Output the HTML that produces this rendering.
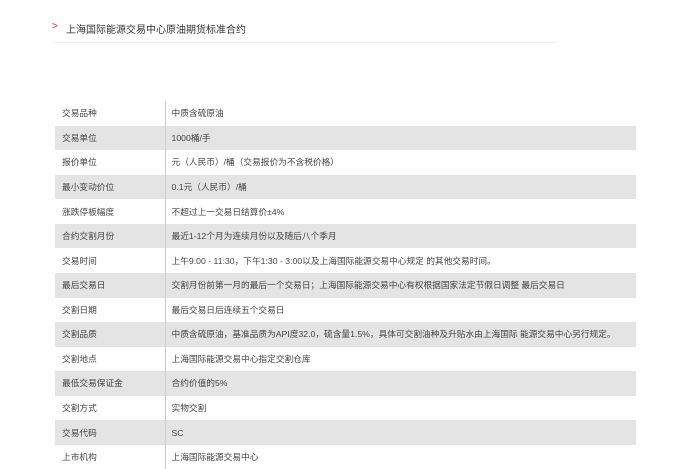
<!DOCTYPE html>
<html><head><meta charset="utf-8"><style>
body{margin:0;background:#fff;width:683px;height:461px;overflow:hidden;font-family:"Liberation Sans","Noto Sans CJK SC",sans-serif;color:#444;}
.t{position:absolute;left:66px;top:21px;font-size:10px;color:#333;}
.a{position:absolute;left:52px;top:21px;font-size:10px;color:#c33;}
.l{position:absolute;left:52px;top:42px;width:505px;height:1px;background:#f2f2f2;}
table{position:absolute;left:55px;top:101px;width:581px;border-collapse:collapse;font-size:8.7px;}
td{height:24.57px;padding:0;line-height:24px;white-space:nowrap;}
td:first-child{width:110px;padding-left:7px;box-sizing:border-box;border-right:1px solid #ccc;}
td:last-child{padding-left:6px;}
tr:nth-child(even) td{background:#e4e4e4;}
</style></head><body>
<div class="a">&gt;</div><div class="t">上海国际能源交易中心原油期货标准合约</div><div class="l"></div>
<table>
<tr><td>交易品种</td><td>中质含硫原油</td></tr>
<tr><td>交易单位</td><td>1000桶/手</td></tr>
<tr><td>报价单位</td><td>元（人民币）/桶（交易报价为不含税价格）</td></tr>
<tr><td>最小变动价位</td><td>0.1元（人民币）/桶</td></tr>
<tr><td>涨跌停板幅度</td><td>不超过上一交易日结算价±4%</td></tr>
<tr><td>合约交割月份</td><td>最近1-12个月为连续月份以及随后八个季月</td></tr>
<tr><td>交易时间</td><td>上午9:00 - 11:30，下午1:30 - 3:00以及上海国际能源交易中心规定 的其他交易时间。</td></tr>
<tr><td>最后交易日</td><td>交割月份前第一月的最后一个交易日；上海国际能源交易中心有权根据国家法定节假日调整 最后交易日</td></tr>
<tr><td>交割日期</td><td>最后交易日后连续五个交易日</td></tr>
<tr><td>交割品质</td><td>中质含硫原油，基准品质为API度32.0，硫含量1.5%，具体可交割油种及升贴水由上海国际 能源交易中心另行规定。</td></tr>
<tr><td>交割地点</td><td>上海国际能源交易中心指定交割仓库</td></tr>
<tr><td>最低交易保证金</td><td>合约价值的5%</td></tr>
<tr><td>交割方式</td><td>实物交割</td></tr>
<tr><td>交易代码</td><td>SC</td></tr>
<tr><td>上市机构</td><td>上海国际能源交易中心</td></tr>
</table>
</body></html>
